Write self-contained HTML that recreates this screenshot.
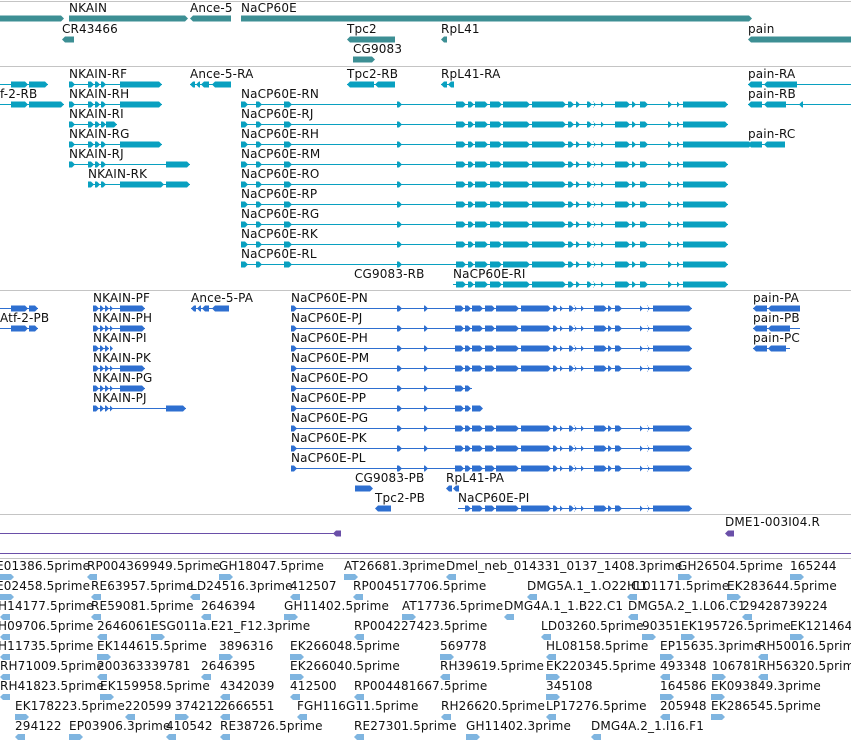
<!DOCTYPE html>
<html><head><meta charset="utf-8">
<style>
html,body{margin:0;padding:0;background:#fff;width:851px;height:742px;overflow:hidden}
svg{display:block}
text{font-family:"DejaVu Sans","Liberation Sans",sans-serif;font-size:12px;letter-spacing:0.15px;fill:#111}
</style></head>
<body>
<svg id="s" width="851" height="742" xmlns="http://www.w3.org/2000/svg"></svg>
<script>
var s=document.getElementById('s'),h='';
function L(x1,y1,x2,y2,c,w){h+='<line x1="'+x1+'" y1="'+y1+'" x2="'+x2+'" y2="'+y2+'" stroke="'+c+'" stroke-width="'+(w||1)+'"/>';}
function T(x,y,t){h+='<text x="'+x+'" y="'+y+'">'+t+'</text>';}
function ex(a,b,y,c,dir){
  var m=y;var hh=3;
  if(dir<0)h+='<polygon points="'+a+','+m+' '+(a+3)+','+(m-hh)+' '+b+','+(m-hh)+' '+b+','+(m+hh)+' '+(a+3)+','+(m+hh)+'" fill="'+c+'"/>';
  else h+='<polygon points="'+a+','+(m-hh)+' '+(b-3)+','+(m-hh)+' '+b+','+m+' '+(b-3)+','+(m+hh)+' '+a+','+(m+hh)+'" fill="'+c+'"/>';
}
function tx(y,start,end,exons,c,dir){L(start,y+0.5,end,y+0.5,c,1);exons.forEach(function(e){ex(e[0],e[1],y+0.5,c,dir||1);});}
var G='#c4c4c4';
L(0,1.5,851,1.5,G);L(0,66.5,851,66.5,G);L(0,290.5,851,290.5,G);L(0,514.5,851,514.5,G);
var TE='#3d8f94';
T(69,12,'NKAIN');T(190,12,'Ance-5');T(241,12,'NaCP60E');
ex(0,64,18.5,TE,1);ex(69,188,18.5,TE,1);ex(190,231,18.5,TE,-1);ex(241,752,18.5,TE,1);
T(62,33,'CR43466');ex(62,74,39.5,TE,-1);
T(347,33,'Tpc2');ex(347,395,39.5,TE,-1);
T(353,53,'CG9083');ex(353,375,59.5,TE,1);
T(441,33,'RpL41');ex(441,447,39.5,TE,-1);
T(748,33,'pain');ex(748,851,39.5,TE,-1);
var C='#09a0c0';
var big=[[456,466],[468,474],[475,488],[490,502],[503,530],[532,566],[568,574],[576,580],[587,592],[594,596],[601,604],[615,630],[632,636],[640,648],[668,672],[677,680],[683,728]];
function nac(y,endx,set){tx(y,241,endx,[[241,248],[256,262],[284,292],[397,402]].concat(set||big),C);}
T(0,98,'f-2-RB');
tx(84,0,48,[[11,28],[29,48]],C);tx(104,0,64,[[11,28],[29,64]],C);
T(69,78,'NKAIN-RF');tx(84,69,162,[[69,75],[88,94],[95,100],[101,106],[120,162]],C);
T(69,98,'NKAIN-RH');tx(104,69,162,[[69,75],[88,94],[95,100],[101,106],[120,162]],C);
T(69,118,'NKAIN-RI');tx(124,69,117,[[69,75],[88,94],[95,100],[101,106],[106,117]],C);
T(69,138,'NKAIN-RG');tx(144,69,162,[[69,75],[88,94],[95,100],[101,106],[120,162]],C);
T(69,158,'NKAIN-RJ');tx(164,69,190,[[69,75],[88,94],[95,100],[101,106],[166,190]],C);
T(88,178,'NKAIN-RK');tx(184,88,190,[[88,94],[95,100],[101,106],[120,164],[166,190]],C);
T(190,78,'Ance-5-RA');tx(84,190,231,[[190,195],[196,200],[201,209],[212,231]],C,-1);
T(347,78,'Tpc2-RB');tx(84,347,395,[[347,374],[375,395]],C,-1);
T(441,78,'RpL41-RA');tx(84,441,454,[[441,447],[448,454]],C,-1);
T(748,78,'pain-RA');tx(84,748,851,[[748,762],[764,797]],C,-1);
T(748,98,'pain-RB');tx(104,748,851,[[748,762],[764,786],[799,803]],C,-1);
T(748,138,'pain-RC');tx(144,748,785,[[748,762],[764,785]],C,-1);
var names=['RN','RJ','RH','RM','RO','RP','RG','RK','RL'];
names.forEach(function(n,i){T(241,98+20*i,'NaCP60E-'+n);var set=big;if(n=='RH'){set=big.slice(0,16).concat([[683,752]]);}nac(104+20*i,n=='RH'?752:728,set);});
T(354,278,'CG9083-RB');T(453,278,'NaCP60E-RI');tx(284,453,728,big.slice(0),C);
var B='#2e6fd0';
function sc(x){return Math.round(455+(x-456)*(692-455)/(728-456));}
var bb=big.map(function(e){return [sc(e[0]),sc(e[1])];});
T(0,322,'Atf-2-PB');tx(308,0,38,[[11,28],[29,38]],B);tx(328,0,38,[[11,28],[29,38]],B);
var nk=[[93,99],[100,104],[105,109],[110,113]];
T(93,302,'NKAIN-PF');tx(308,93,145,nk.concat([[120,145]]),B);
T(93,322,'NKAIN-PH');tx(328,93,145,nk.concat([[120,145]]),B);
T(93,342,'NKAIN-PI');tx(348,93,109,nk,B);
T(93,362,'NKAIN-PK');tx(368,93,145,nk.concat([[120,145]]),B);
T(93,382,'NKAIN-PG');tx(388,93,145,nk.concat([[120,145]]),B);
T(93,402,'NKAIN-PJ');tx(408,93,186,nk.concat([[166,186]]),B);
T(191,302,'Ance-5-PA');tx(308,191,229,[[191,196],[197,201],[202,209],[212,229]],B,-1);
var pn=['PN','PJ','PH','PM','PO','PP','PG','PK','PL'];
pn.forEach(function(n,i){T(291,302+20*i,'NaCP60E-'+n);var set=bb,e=692;if(n=='PO'){set=bb.slice(0,2);e=472;}if(n=='PP'){set=bb.slice(0,3);e=470;}tx(308+20*i,291,e,[[291,297],[397,402],[424,428]].concat(set),B);});
T(753,302,'pain-PA');tx(308,753,800,[[753,767],[768,800]],B,-1);
T(753,322,'pain-PB');tx(328,753,800,[[753,767],[768,790]],B,-1);
T(753,342,'pain-PC');tx(348,753,790,[[753,767],[768,786]],B,-1);
T(355,482,'CG9083-PB');ex(355,373,488.5,B,1);
T(446,482,'RpL41-PA');ex(446,452,488.5,B,-1);ex(453,459,488.5,B,-1);
T(375,502,'Tpc2-PB');ex(375,391,508.5,B,-1);
T(458,502,'NaCP60E-PI');tx(508,458,692,bb.filter(function(e){return e[0]>=458;}),B);
var P='#6a4fa8';
L(0,533.5,340,533.5,P);ex(333,341,533.5,P,-1);
T(725,526,'DME1-003I04.R');ex(725,734,533.5,P,-1);
L(0,553.5,851,553.5,P);L(0,558.5,851,558.5,G);
var LB='#7fb5e0';
var rows=[
[[-4,'E01386.5prime'],[87,'RP004369949.5prime'],[219,'GH18047.5prime'],[344,'AT26681.3prime'],[446,'Dmel_neb_014331_0137_1408.3prime'],[678,'GH26504.5prime'],[790,'165244']],
[[-4,'E02458.5prime'],[91,'RE63957.5prime'],[190,'LD24516.3prime'],[290,'412507'],[353,'RP004517706.5prime'],[527,'DMG5A.1_1.O22.C1'],[627,'HL01171.5prime'],[727,'EK283644.5prime']],
[[-2,'H14177.5prime'],[91,'RE59081.5prime'],[201,'2646394'],[284,'GH11402.5prime'],[402,'AT17736.5prime'],[504,'DMG4A.1_1.B22.C1'],[628,'DMG5A.2_1.L06.C1'],[742,'29428739224']],
[[-2,'H09706.5prime'],[97,'2646061'],[151,'ESG011a.E21_F12.3prime'],[354,'RP004227423.5prime'],[541,'LD03260.5prime'],[642,'90351'],[681,'EK195726.5prime'],[790,'EK121464']],
[[-2,'H11735.5prime'],[97,'EK144615.5prime'],[219,'3896316'],[290,'EK266048.5prime'],[440,'569778'],[546,'HL08158.5prime'],[660,'EP15635.3prime'],[758,'RH50016.5prime']],
[[0,'RH71009.5prime'],[97,'200363339781'],[201,'2646395'],[290,'EK266040.5prime'],[440,'RH39619.5prime'],[546,'EK220345.5prime'],[660,'493348'],[712,'106781'],[758,'RH56320.5prime']],
[[0,'RH41823.5prime'],[100,'EK159958.5prime'],[220,'4342039'],[290,'412500'],[354,'RP004481667.5prime'],[546,'345108'],[660,'164586'],[711,'EK093849.3prime']],
[[15,'EK178223.5prime'],[125,'220599'],[175,'374212'],[220,'2666551'],[297,'FGH116G11.5prime'],[441,'RH26620.5prime'],[546,'LP17276.5prime'],[660,'205948'],[711,'EK286545.5prime']],
[[15,'294122'],[69,'EP03906.3prime'],[166,'410542'],[220,'RE38726.5prime'],[354,'RE27301.5prime'],[466,'GH11402.3prime'],[591,'DMG4A.2_1.I16.F1']]
];
rows.forEach(function(r,i){var y=570+20*i;r.forEach(function(it){T(it[0],y,it[1]);var x=Math.max(it[0],0);var d=(it[1].charCodeAt(0)%2)?1:-1;ex(x,x+(d>0?14:10),y+7,LB,d);});});
s.innerHTML=h;
</script>
</body></html>
